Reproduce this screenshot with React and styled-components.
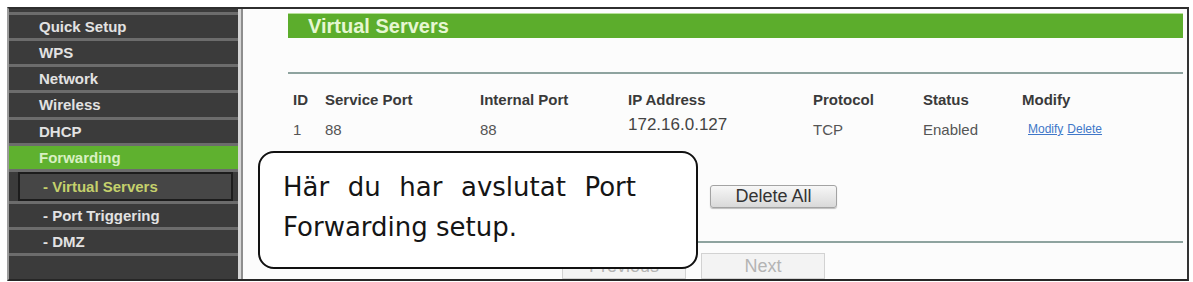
import React from "react";
import styled, { createGlobalStyle } from "styled-components";

const Global = createGlobalStyle`
  html, body { margin: 0; padding: 0; background: #ffffff; }
  body { font-family: "Liberation Sans", Arial, sans-serif; }
`;

const Frame = styled.div`
  position: relative;
  box-sizing: border-box;
  margin: 7px 4px 0 7px;
  height: 274px;
  display: flex;
  border-top: 2px solid #2e2e2e;
  border-bottom: 2px solid #262626;
  border-left: 2px solid #9c9c9c;
  border-right: 2px solid #333333;
  overflow: hidden;
`;

const Sidebar = styled.nav`
  flex: 0 0 229px;
  background: #3b3b3b;
  border-right: 3px solid #d6d6d6;
  padding-top: 3px;
  display: flex;
  flex-direction: column;
`;

const NavItem = styled.div`
  border-top: 3px solid #6c6c6c;
  height: ${(p) => (p.$tall ? 31 : 25)}px;
  display: flex;
  align-items: center;
  padding-left: ${(p) => (p.$box ? 0 : p.$sub ? 34 : 30)}px;
  font-weight: bold;
  font-size: 15px;
  color: ${(p) => (p.$active ? "#d8f0c2" : "#e2e2e2")};
  background: ${(p) => (p.$active ? "#5fb12f" : "transparent")};
  white-space: nowrap;
`;

const SelectedBox = styled.div`
  box-sizing: border-box;
  flex: 1;
  height: 100%;
  margin: 0 5px 0 9px;
  border: 2px solid #1c1c1c;
  background: #464646;
  color: #c4d06c;
  display: flex;
  align-items: center;
  padding-left: 23px;
`;

const Content = styled.main`
  flex: 1;
  background: #fcfcfc;
  border-left: 2px solid #8e8e8e;
  padding: 4px 4px 0 45px;
  display: flex;
  flex-direction: column;
`;

const TitleBar = styled.div`
  height: 26px;
  border-top: 1px solid #b6e098;
  background: #5cad2c;
  display: flex;
  align-items: center;
  padding-left: 20px;
  font-weight: bold;
  font-size: 20px;
  color: #e6f7d2;
`;

const Rule = styled.div`
  height: 2px;
  background: #8ea39f;
  margin-top: ${(p) => p.$top}px;
  flex-shrink: 0;
`;

const Table = styled.div`
  margin-top: 10px;
  padding-left: 5px;
`;

const Row = styled.div`
  display: grid;
  grid-template-columns: 32px 155px 148px 185px 110px 99px 1fr;
  height: 30px;
  align-items: center;
  font-size: 15px;
  font-weight: ${(p) => (p.$head ? "bold" : "normal")};
  color: ${(p) => (p.$head ? "#3a3a3a" : "#555555")};
`;

const IpCell = styled.span`
  font-size: 17px;
  padding-bottom: 8px;
  color: #444;
`;

const Links = styled.span`
  display: flex;
  gap: 4px;
  padding-left: 6px;
  font-size: 12px;
`;

const Link = styled.a`
  color: #4077c8;
  text-decoration: underline;
`;

const ButtonRow = styled.div`
  margin-top: 41px;
  padding-left: 422px;
  display: flex;
  gap: 14px;
`;

const Button = styled.button`
  width: 127px;
  height: 23px;
  padding: 0;
  border: 1px solid #a3a3a3;
  border-radius: 3px;
  background: linear-gradient(#f7f7f7, #d9d9d9);
  box-shadow: 0 1px 1px rgba(0, 0, 0, 0.25);
  font-family: "Liberation Sans", Arial, sans-serif;
  font-size: 18px;
  color: #333;
`;

const NavRow = styled.div`
  margin-top: 10px;
  padding-left: 274px;
  display: flex;
  gap: 15px;
`;

const PageButton = styled.button`
  width: 124px;
  height: 26px;
  padding: 0;
  border: 1px solid #d2d2d2;
  background: #f3f3f3;
  font-family: "Liberation Sans", Arial, sans-serif;
  font-size: 18px;
  color: #b4b4b4;
`;

const Callout = styled.div`
  position: absolute;
  left: 249px;
  top: 142px;
  width: 440px;
  height: 118px;
  box-sizing: border-box;
  border: 2.5px solid #111;
  border-radius: 16px;
  background: #ffffff;
  padding: 14px 60px 0 23px;
  font-family: "DejaVu Sans", Verdana, sans-serif;
  font-size: 26px;
  line-height: 40px;
  text-align: justify;
  color: #151515;
`;

const menu = [
  { label: "Quick Setup" },
  { label: "WPS" },
  { label: "Network" },
  { label: "Wireless" },
  { label: "DHCP" },
  { label: "Forwarding", active: true },
  { label: "- Virtual Servers", selected: true },
  { label: "- Port Triggering", sub: true },
  { label: "- DMZ", sub: true },
];

export default function App() {
  return (
    <>
      <Global />
      <Frame>
        <Sidebar>
          {menu.map((m) =>
            m.selected ? (
              <NavItem key={m.label} $tall $box>
                <SelectedBox>{m.label}</SelectedBox>
              </NavItem>
            ) : (
              <NavItem key={m.label} $sub={m.sub} $active={m.active}>
                {m.label}
              </NavItem>
            )
          )}
          <NavItem />
        </Sidebar>
        <Content>
          <TitleBar>Virtual Servers</TitleBar>
          <Rule $top={34} />
          <Table>
            <Row $head>
              <span>ID</span>
              <span>Service Port</span>
              <span>Internal Port</span>
              <span>IP Address</span>
              <span>Protocol</span>
              <span>Status</span>
              <span>Modify</span>
            </Row>
            <Row>
              <span>1</span>
              <span>88</span>
              <span>88</span>
              <IpCell>172.16.0.127</IpCell>
              <span>TCP</span>
              <span>Enabled</span>
              <Links>
                <Link>Modify</Link>
                <Link>Delete</Link>
              </Links>
            </Row>
          </Table>
          <ButtonRow>
            <Button>Delete All</Button>
          </ButtonRow>
          <Rule $top={33} />
          <NavRow>
            <PageButton>Previous</PageButton>
            <PageButton>Next</PageButton>
          </NavRow>
        </Content>
        <Callout>Här du har avslutat Port Forwarding setup.</Callout>
      </Frame>
    </>
  );
}
